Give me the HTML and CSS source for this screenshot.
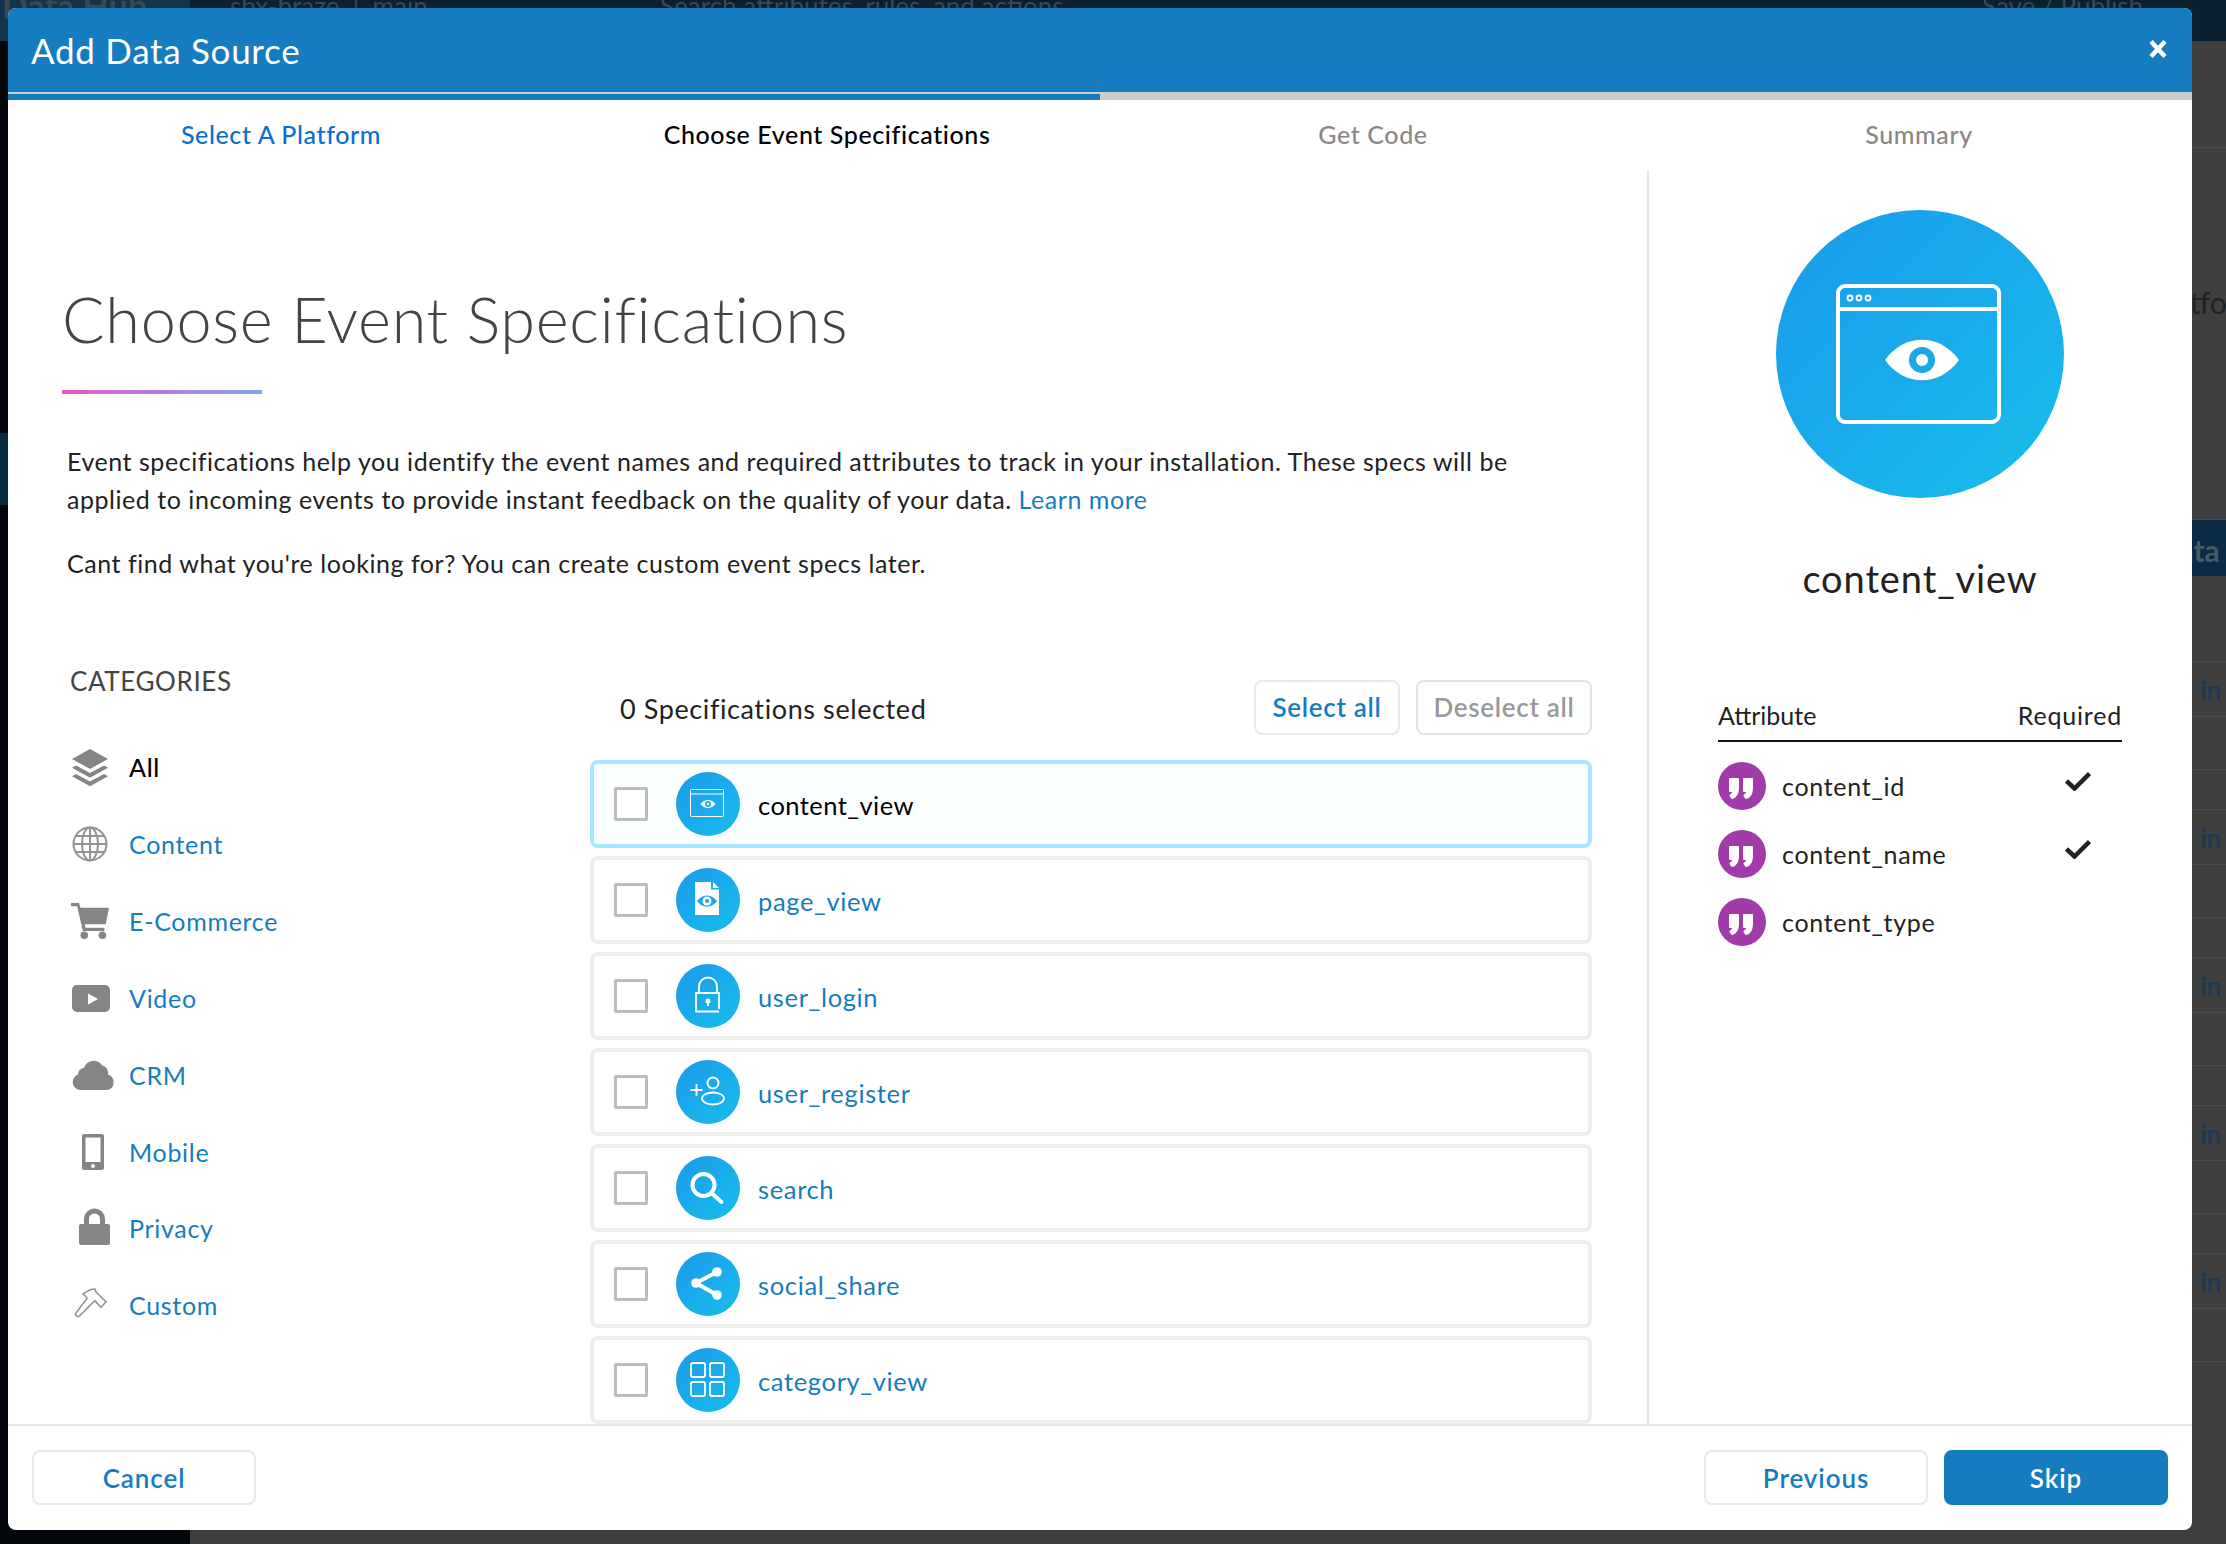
FILE: index.html
```html
<!DOCTYPE html>
<html lang="en">
<head>
  <meta charset="UTF-8">
  <title>Add Data Source</title>
  <link rel="stylesheet" href="styles.css">
</head>
<body>

  <main class="backdrop">
    <div class="backdrop-top">
      <span class="top-brand">Data Hub</span>
      <span class="top-path">sbx-braze &nbsp;|&nbsp; main</span>
      <span class="top-search">Search attributes, rules, and actions</span>
      <span class="top-save">Save / Publish</span>
    </div>
    <div class="backdrop-body">
      <div class="backdrop-side"><div class="side-active"></div></div>
      <div class="backdrop-content">
        <div class="back-row first"></div>
        <div class="back-row title"><span>Platform</span></div>
        <div class="back-band"><span>Data Sources</span></div>
        <div class="back-row lead"></div>
        <div class="back-row a"><span>in</span></div><div class="back-row b"></div><div class="back-row c"></div>
        <div class="back-row a"><span>in</span></div><div class="back-row b"></div><div class="back-row c"></div>
        <div class="back-row a"><span>in</span></div><div class="back-row b"></div><div class="back-row c"></div>
        <div class="back-row a"><span>in</span></div><div class="back-row b"></div><div class="back-row c"></div>
        <div class="back-row a"><span>in</span></div><div class="back-row b"></div>
      </div>
    </div>
  </main>

  <div class="modal">
    <header class="modal-head">
      <h2>Add Data Source</h2>
      <svg class="close" viewBox="0 0 20 20"><path d="M3 2.500l14 15M17 2.500L3 17.500"/></svg>
    </header>
    <div class="progress"><div class="progress-bar"></div></div>

    <nav class="steps">
      <a class="done" href="javascript:;">Select A Platform</a>
      <a class="current" href="javascript:;">Choose Event Specifications</a>
      <a href="javascript:;">Get Code</a>
      <a href="javascript:;">Summary</a>
    </nav>

    <div class="modal-body">
      <section class="main-col">
        <h1>Choose Event Specifications</h1>
        <div class="rule"></div>
        <p class="intro">Event specifications help you identify the event names and required attributes to track in your installation. These specs will be<br>applied to incoming events to provide instant feedback on the quality of your data. <a href="javascript:;">Learn more</a></p>
        <p class="intro second">Cant find what you're looking for? You can create custom event specs later.</p>

        <div class="picker">
          <aside class="cats">
            <h3>CATEGORIES</h3>
            <ul>
              <li class="on">
                <svg viewBox="0 0 40 40"><path d="M20 2l18 10-18 10L2 12z"/><path d="M6 18.500l14 7.500 14-7.500 4 2.200-18 10-18-10z"/><path d="M6 27l14 7.500L34 27l4 2.200-18 10-18-10z"/></svg>
                All
              </li>
              <li>
                <svg viewBox="0 0 40 40" class="line"><circle cx="20" cy="20" r="16.500"/><ellipse cx="20" cy="20" rx="8" ry="16.500"/><path d="M20 3.500v33M3.500 20h33M6 12h28M6 28h28"/></svg>
                Content
              </li>
              <li>
                <svg viewBox="0 0 42 40"><path d="M1 1h8.500l1.500 5h30l-3.500 17.500H15.500l.8 3.500H36v3.500H13.500L7.500 4.500H1z"/><circle cx="15" cy="35" r="4"/><circle cx="34" cy="35" r="4"/></svg>
                E-Commerce
              </li>
              <li>
                <svg viewBox="0 0 40 40"><path d="M7 7h28a5 5 0 0 1 5 5v17a5 5 0 0 1-5 5H7a5 5 0 0 1-5-5V12a5 5 0 0 1 5-5zm11 8.500v11l10-5.500z" fill-rule="evenodd"/></svg>
                Video
              </li>
              <li>
                <svg class="cloud" viewBox="0 0 46 40"><path d="M10 35a8 8 0 0 1-2-15.500A6.500 6.500 0 0 1 14 13a10 10 0 0 1 18-2.500 7.500 7.500 0 0 1 6 9 8 8 0 0 1-1 15.500z"/></svg>
                CRM
              </li>
              <li>
                <svg viewBox="0 0 40 40"><path d="M14 2h18a2 2 0 0 1 2 2v32a2 2 0 0 1-2 2H14a2 2 0 0 1-2-2V4a2 2 0 0 1 2-2zm1.500 3.500V30h15V5.500zM23 32a2 2 0 1 0 0 4 2 2 0 0 0 0-4z" fill-rule="evenodd"/></svg>
                Mobile
              </li>
              <li>
                <svg viewBox="0 0 40 40"><path d="M14 16v-5a10.500 10.500 0 0 1 21 0v5h3a2 2 0 0 1 2 2v17a2 2 0 0 1-2 2H11a2 2 0 0 1-2-2V18a2 2 0 0 1 2-2zm5 0h11v-5a5.500 5.500 0 0 0-11 0z" fill-rule="evenodd"/></svg>
                Privacy
              </li>
              <li>
                <svg viewBox="0 0 40 40" class="line thin"><path d="M13 9c4-3 8-5 12-5l1 3 10 9.700-5 5.700-6-6.500-1.500 1L9.500 31c-1.500 1.500-4.500-.5-4-2.500L17 13.500l-1-2c-1-1-2-2-3-2.500z"/></svg>
                Custom
              </li>
            </ul>
          </aside>

          <div class="specs">
            <div class="specs-top">
              <span>0 Specifications selected</span>
              <div class="specs-btns">
                <button class="btn small blue">Select all</button>
                <button class="btn small grey">Deselect all</button>
              </div>
            </div>
            <div class="spec-list">
              <div class="spec active">
                <i class="check"></i>
                <span class="disc">
                  <svg viewBox="0 0 64 64" class="line thin"><rect x="14.500" y="17.500" width="33" height="27" rx="1"/><path d="M14.500 22h33"/><path class="white" d="M24.500 32c4-5.500 11-5.500 15 0-4 5.500-11 5.500-15 0z"/><circle class="cut" cx="32" cy="32" r="3"/><circle class="white" cx="32" cy="32" r="1.300"/></svg>
                </span>
                <b>content_view</b>
              </div>
              <div class="spec">
                <i class="check"></i>
                <span class="disc">
                  <svg viewBox="0 0 64 64" class="solid"><path d="M19 14h16v7.500h8V47H19z"/><path d="M37 14l6 6h-6z"/><path class="cut" d="M21 33c5-7.500 15-7.500 20 0-5 7.500-15 7.500-20 0z"/><circle class="white" cx="31" cy="33" r="4.500"/><circle class="cut" cx="31" cy="33" r="2"/></svg>
                </span>
                <b>page_view</b>
              </div>
              <div class="spec">
                <i class="check"></i>
                <span class="disc">
                  <svg viewBox="0 0 64 64" class="line"><path d="M23 29v-6.500a9 9 0 0 1 18 0V29"/><path d="M43 47.500H20V29h23v16"/><circle class="white" cx="32" cy="37" r="2.500"/><path d="M32 38v4"/></svg>
                </span>
                <b>user_login</b>
              </div>
              <div class="spec">
                <i class="check"></i>
                <span class="disc">
                  <svg viewBox="0 0 64 64" class="line"><circle cx="37" cy="23" r="5.500"/><ellipse cx="37" cy="38.500" rx="11" ry="6"/><path d="M14.500 30h12M20.500 24v12"/></svg>
                </span>
                <b>user_register</b>
              </div>
              <div class="spec">
                <i class="check"></i>
                <span class="disc">
                  <svg viewBox="0 0 64 64" class="line heavy"><circle cx="27.500" cy="29" r="11"/><path d="M36 37.500l9.500 8.500" stroke-linecap="round"/></svg>
                </span>
                <b>search</b>
              </div>
              <div class="spec">
                <i class="check"></i>
                <span class="disc">
                  <svg viewBox="0 0 64 64" class="line heavy"><path d="M41 20L20 31l21 12"/><circle class="white" cx="41" cy="20" r="4.800"/><circle class="white" cx="20" cy="31" r="4.800"/><circle class="white" cx="41" cy="43" r="4.800"/></svg>
                </span>
                <b>social_share</b>
              </div>
              <div class="spec">
                <i class="check"></i>
                <span class="disc">
                  <svg viewBox="0 0 64 64" class="line"><rect x="15" y="15" width="14" height="14" rx="2"/><rect x="34" y="15" width="14" height="14" rx="2"/><rect x="15" y="34" width="14" height="14" rx="2"/><rect x="34" y="34" width="14" height="14" rx="2"/></svg>
                </span>
                <b>category_view</b>
              </div>
            </div>
          </div>
        </div>
      </section>

      <aside class="detail">
        <div class="big-disc">
          <svg viewBox="0 0 288 288"><rect class="frame" x="62" y="76" width="161" height="136" rx="7"/><path class="frame" d="M62 99h161"/><circle class="dot" cx="74" cy="88" r="2.500"/><circle class="dot" cx="83" cy="88" r="2.500"/><circle class="dot" cx="92" cy="88" r="2.500"/><path class="fill" d="M109 150c19-27 55-27 74 0-19 27-55 27-74 0z"/><circle class="hole" cx="146" cy="150" r="13"/><circle class="fill" cx="146" cy="150" r="6"/></svg>
        </div>
        <h2>content_view</h2>
        <div class="attr-head"><span>Attribute</span><span>Required</span></div>
        <div class="attr">
          <span class="quote"><svg viewBox="0 0 48 48"><path d="M12 17h8v9c0 5-2 9-6 10l-1.500-2.500c2-1 3-2.500 3-4.500H12zM26 17h8v9c0 5-2 9-6 10l-1.500-2.500c2-1 3-2.500 3-4.500H26z"/></svg></span>
          content_id
          <svg class="tick" viewBox="0 0 26 20"><path d="M1.500 10l8 7.500 15-15"/></svg>
        </div>
        <div class="attr">
          <span class="quote"><svg viewBox="0 0 48 48"><path d="M12 17h8v9c0 5-2 9-6 10l-1.500-2.500c2-1 3-2.500 3-4.500H12zM26 17h8v9c0 5-2 9-6 10l-1.500-2.500c2-1 3-2.500 3-4.500H26z"/></svg></span>
          content_name
          <svg class="tick" viewBox="0 0 26 20"><path d="M1.500 10l8 7.500 15-15"/></svg>
        </div>
        <div class="attr">
          <span class="quote"><svg viewBox="0 0 48 48"><path d="M12 17h8v9c0 5-2 9-6 10l-1.500-2.500c2-1 3-2.500 3-4.500H12zM26 17h8v9c0 5-2 9-6 10l-1.500-2.500c2-1 3-2.500 3-4.500H26z"/></svg></span>
          content_type
        </div>
      </aside>
    </div>

    <footer class="modal-foot">
      <button class="btn wide blue">Cancel</button>
      <div class="foot-right">
        <button class="btn wide blue">Previous</button>
        <button class="btn wide primary">Skip</button>
      </div>
    </footer>
  </div>

</body>
</html>
```

FILE: styles.css
```css
* {
  box-sizing: border-box;
}
html, body {
  margin: 0;
  height: 100%;
  overflow: hidden;
}
body {
  position: relative;
  width: 2226px;
  height: 1544px;
  font-family: "Lato", "Liberation Sans", sans-serif;
  color: #222;
  background: #3f3f3f;
}

/* dimmed page behind the dialog */
.backdrop {
  width: 100%;
  height: 100%;
  display: flex;
  flex-direction: column;
}
.backdrop-top {
  height: 41px;
  flex: none;
  display: flex;
  background: #0a1f2f;
  color: #3a4852;
  font-size: 26px;
  line-height: 12px;
}
.backdrop-top span {
  height: 12px;
  overflow: hidden;
  white-space: nowrap;
}
.top-brand {
  width: 190px;
  font-size: 34px;
  font-weight: 700;
  padding-left: 2px;
}
.backdrop-top .top-brand {
  height: 41px;
  background: #12334a;
}
.top-path {
  width: 470px;
  padding-left: 40px;
}
.top-search {
  width: 1322px;
}
.top-save {
  flex: 1;
}
.backdrop-body {
  flex: 1;
  min-height: 0;
  display: flex;
}
.backdrop-side {
  width: 190px;
  flex: none;
  padding-top: 392px;
  background: #03070b;
}
.side-active {
  height: 72px;
  background: #062a40;
}
.backdrop-content {
  flex: 1;
  min-width: 0;
  overflow: hidden;
  background: #3f3f3f;
  color: #222;
  font-size: 26px;
}
.back-row {
  border-bottom: 1px solid #4a4a4a;
}
.back-row.first {
  height: 107px;
}
.back-row.title {
  height: 372px;
  padding: 136px 0 0 1960px;
  font-size: 30px;
  white-space: nowrap;
  overflow: hidden;
}
.back-band {
  height: 56px;
  padding: 12px 0 0 1966px;
  background: #0a2a45;
  color: #4a5a66;
  font-size: 30px;
  font-weight: 700;
  white-space: nowrap;
  overflow: hidden;
}
.back-row.lead {
  height: 86px;
}
.back-row.a {
  height: 55px;
  padding: 12px 0 0 2010px;
  color: #1a3a55;
  font-weight: 700;
}
.back-row.b {
  height: 53px;
}
.back-row.c {
  height: 40px;
}

.modal {
  position: absolute;
  left: 8px;
  top: 8px;
  width: 2184px;
  height: 1522px;
  background: #fff;
  border-radius: 8px;
  overflow: hidden;
  display: flex;
  flex-direction: column;
}
.modal-head {
  height: 84px;
  flex: none;
  background: #157cc0;
  color: #fff;
  display: flex;
  align-items: center;
  justify-content: space-between;
  padding: 0 24px 0 23px;
}
.modal-head h2 {
  margin: 0;
  font-size: 35px;
  font-weight: 400;
  letter-spacing: 0.7px;
}
.close {
  width: 20px;
  height: 20px;
  margin-top: -3px;
  fill: none;
  stroke: #fff;
  stroke-width: 4.5;
}
.progress {
  height: 8px;
  flex: none;
  background: #ccc;
  padding-top: 2px;
}
.progress-bar {
  width: 1092px;
  height: 6px;
  background: #157cc0;
}

.steps {
  height: 70px;
  flex: none;
  display: grid;
  grid-template-columns: repeat(4, 1fr);
  align-items: center;
  text-align: center;
  font-size: 25px;
  font-weight: 500;
  letter-spacing: 0.6px;
  padding-bottom: 2px;
}
.steps a {
  color: #888;
  text-decoration: none;
}
.steps .done {
  color: #0b6fd0;
}
.steps .current {
  color: #000;
}

.modal-body {
  flex: 1;
  min-height: 0;
  display: flex;
}
.main-col {
  width: 1641px;
  flex: none;
  padding: 0 55px 0 54px;
  border-right: 2px solid #e6e6e6;
  overflow: hidden;
}
.main-col h1 {
  margin: 0;
  padding-top: 109px;
  font-size: 63px;
  font-weight: 300;
  line-height: 80px;
  letter-spacing: 0.7px;
  color: #444;
}
.rule {
  width: 200px;
  height: 4px;
  margin-top: 31px;
  background: linear-gradient(90deg, #ef55c8, #7ea8ee);
}
.intro {
  margin: 48px 0 0 5px;
  font-size: 25px;
  line-height: 38px;
  letter-spacing: 0.54px;
  color: #222;
}
.intro a {
  color: #157cc0;
  text-decoration: none;
}
.intro.second {
  margin-top: 26px;
}

.picker {
  margin-top: 82px;
  display: flex;
}
.cats {
  width: 528px;
  flex: none;
  padding-left: 8px;
}
.cats h3 {
  margin: 0;
  font-size: 26px;
  font-weight: 400;
  line-height: 34px;
  letter-spacing: 0.6px;
  color: #444;
}
.cats ul {
  list-style: none;
  margin: 31px 0 0;
  padding: 0;
}
.cats li {
  height: 76.85px;
  display: flex;
  align-items: center;
  gap: 20px;
  font-size: 25px;
  letter-spacing: 0.7px;
  color: #157cc0;
}
.cats li.on {
  color: #000;
  font-weight: 500;
}
.cats svg {
  width: 40px;
  height: 40px;
  margin-right: -1px;
  fill: #858585;
  overflow: visible;
}
.cats svg.cloud {
  width: 46px;
  margin-right: -7px;
}
.cats svg.line {
  fill: none;
  stroke: #939393;
  stroke-width: 2;
}
.cats svg.thin {
  stroke-width: 1.6;
}

.specs {
  flex: 1;
  min-width: 0;
  padding-top: 15px;
}
.specs-top {
  height: 56px;
  display: flex;
  align-items: center;
  justify-content: space-between;
  padding-left: 30px;
  font-size: 27px;
  letter-spacing: 0.6px;
}
.specs-top > span {
  padding-top: 3px;
}
.specs-btns {
  display: flex;
  gap: 16px;
}
.btn {
  font-family: inherit;
  font-weight: 600;
  letter-spacing: 0.7px;
  background: #fff;
  border: 2px solid #e4eaf2;
  border-radius: 8px;
  padding: 0;
}
.btn.small {
  height: 55px;
  font-size: 26px;
}
.btn.small.blue {
  width: 146px;
}
.btn.small.grey {
  width: 176px;
  color: #999;
  border-color: #dde4ee;
}
.btn.blue {
  color: #157cc0;
}
.btn.wide {
  width: 224px;
  height: 55px;
  font-size: 26px;
  letter-spacing: 0.9px;
}
.btn.primary {
  background: #157cc0;
  border-color: #157cc0;
  color: #fff;
}

.spec-list {
  margin-top: 25px;
  display: flex;
  flex-direction: column;
  gap: 8px;
}
.spec {
  height: 88px;
  flex: none;
  display: flex;
  align-items: center;
  border: 4px solid #eee;
  border-radius: 8px;
  padding-left: 20px;
  font-size: 25.5px;
  letter-spacing: 0.65px;
  color: #157cc0;
}
.spec b {
  font-weight: 400;
  margin-left: 18px;
  padding-top: 2px;
}
.spec.active {
  border-color: #a5e8ff;
  background: #fbfeff;
  color: #000;
  letter-spacing: 0.45px;
}
.check {
  width: 34px;
  height: 34px;
  border: 3px solid #bcbcbc;
  border-radius: 2px;
  background: #fff;
  margin-right: 28px;
}
.disc {
  width: 64px;
  height: 64px;
  flex: none;
  border-radius: 50%;
  background: linear-gradient(135deg, #1a9aeb, #18bdeb);
}
.disc svg {
  display: block;
  width: 64px;
  height: 64px;
}
.disc svg.solid {
  fill: #fff;
}
.disc svg.line {
  fill: none;
  stroke: #fff;
  stroke-width: 1.8;
}
.disc svg.thin {
  stroke-width: 1;
}
.disc svg.heavy {
  stroke-width: 4;
}
.disc .white {
  fill: #fff;
  stroke: none;
}
.disc .cut {
  fill: #1aa8eb;
  stroke: none;
}

.detail {
  flex: 1;
  min-width: 0;
  padding: 0 70px 0 69px;
}
.big-disc {
  width: 288px;
  height: 288px;
  margin: 40px auto 0;
  border-radius: 50%;
  background: linear-gradient(135deg, #1a9aeb, #18bdeb);
}
.big-disc svg {
  display: block;
  width: 288px;
  height: 288px;
}
.big-disc .frame {
  fill: none;
  stroke: #fff;
  stroke-width: 4;
}
.big-disc .dot {
  fill: none;
  stroke: #fff;
  stroke-width: 1.8;
}
.big-disc .fill {
  fill: #fff;
}
.big-disc .hole {
  fill: #1ba8eb;
}
.detail h2 {
  margin: 56px 0 0;
  text-align: center;
  font-size: 38px;
  line-height: 48px;
  font-weight: 400;
  letter-spacing: 0.9px;
  color: #222;
}
.attr-head {
  margin-top: 91px;
  height: 49px;
  display: flex;
  align-items: center;
  justify-content: space-between;
  border-bottom: 2px solid #111;
  font-size: 25px;
  padding-bottom: 3px;
}
.attr-head span + span {
  letter-spacing: 0.8px;
}
.attr {
  height: 48px;
  margin-top: 20px;
  display: flex;
  align-items: center;
  gap: 16px;
  font-size: 25px;
  letter-spacing: 0.7px;
}
.quote {
  width: 48px;
  height: 48px;
  border-radius: 50%;
  background: #a23ba9;
}
.quote svg {
  display: block;
  width: 48px;
  height: 48px;
  fill: #fff;
  stroke: #fff;
  stroke-width: 2;
  stroke-linejoin: round;
}
.tick {
  width: 26px;
  height: 20px;
  margin: -11px 31px 0 auto;
  fill: none;
  stroke: #222;
  stroke-width: 4.5;
}

.modal-foot {
  height: 106px;
  flex: none;
  border-top: 2px solid #e5e5e5;
  display: flex;
  align-items: flex-start;
  justify-content: space-between;
  padding: 24px 24px 0;
}
.foot-right {
  display: flex;
  gap: 16px;
}
```
